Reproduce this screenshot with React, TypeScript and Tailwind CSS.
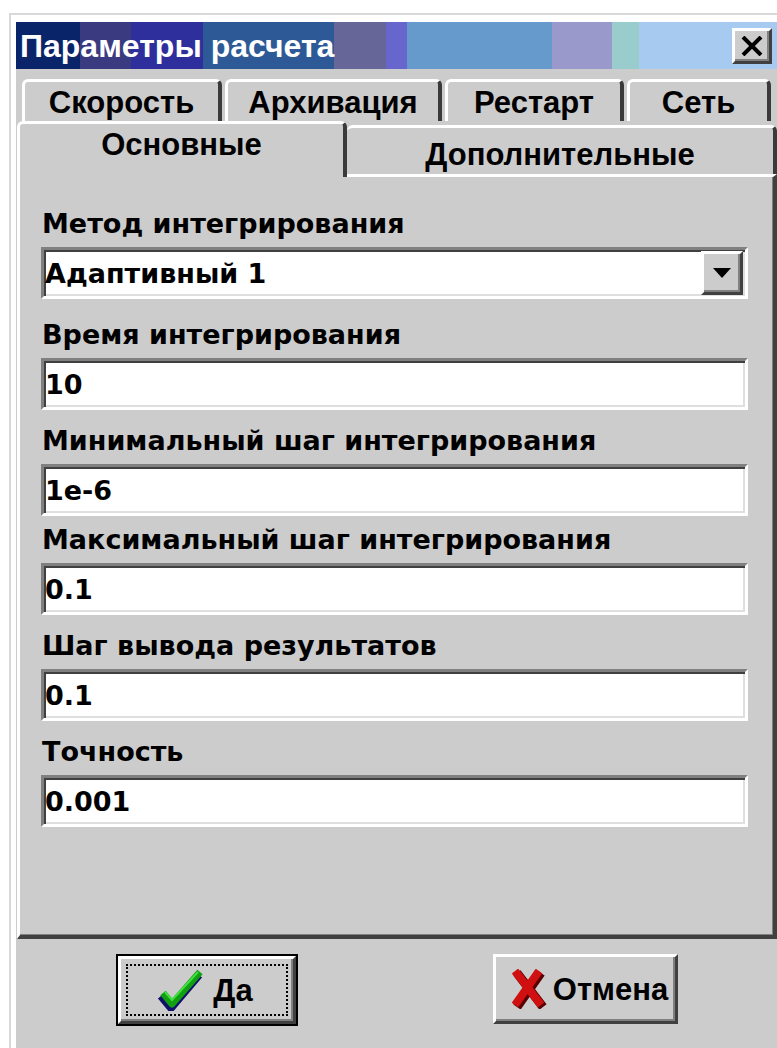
const sunken =
  "border-[3px] border-t-[#808080] border-l-[#808080] border-b-white border-r-white shadow-[inset_2px_2px_0_#404040,inset_-2px_-2px_0_#dfdfdf]";
const raised =
  "border-[3px] border-t-white border-l-white border-b-[#404040] border-r-[#404040] shadow-[inset_-2px_-2px_0_#808080]";

const labelFont = "font-['DejaVu_Sans',sans-serif] font-bold text-[27px] leading-[27px] text-black";
const tabFont = "font-['Liberation_Sans',Arial,sans-serif] font-bold text-[31px] leading-[31px] text-black";

type Field = { label: string; value: string; gap: string; combo?: boolean };

const fields: Field[] = [
  { label: "Метод интегрирования", value: "Адаптивный 1", gap: "mt-0", combo: true },
  { label: "Время интегрирования", value: "10", gap: "mt-[22px]" },
  { label: "Минимальный шаг интегрирования", value: "1e-6", gap: "mt-[17px]" },
  { label: "Максимальный шаг интегрирования", value: "0.1", gap: "mt-[10px]" },
  { label: "Шаг вывода результатов", value: "0.1", gap: "mt-[17px]" },
  { label: "Точность", value: "0.001", gap: "mt-[17px]" },
];

function CheckIcon() {
  return (
    <svg width="46" height="42" viewBox="0 0 46 42">
      <path d="M4 27 L14 39 L42 6" fill="none" stroke="#10106a" strokeWidth="8" strokeLinejoin="round" />
      <path d="M6 24 L15 35 L43 3" fill="none" stroke="#10a010" strokeWidth="7" strokeLinejoin="round" />
      <path d="M8 23 L15 31 L41 3" fill="none" stroke="#40e040" strokeWidth="2" />
    </svg>
  );
}

function CrossIcon() {
  return (
    <svg width="36" height="40" viewBox="0 0 36 40">
      <path d="M6 4 L32 38 M30 4 L6 38" stroke="#5a0000" strokeWidth="9" />
      <path d="M4 2 L30 36 M28 2 L4 36" stroke="#d01010" strokeWidth="8" />
    </svg>
  );
}

function Input({ field }: { field: Field }) {
  return (
    <div className={`${field.gap} flex flex-col`}>
      <div className={`${labelFont} pl-[22px] h-[27px] whitespace-nowrap`}>{field.label}</div>
      <div className={`${sunken} mt-[10px] ml-[21px] mr-[25px] h-[52px] bg-white flex items-center`}>
        <span className={`${labelFont} pl-[1px] flex-1`}>{field.value}</span>
        {field.combo && (
          <div className={`${raised} bg-[#cccccc] w-[42px] h-[44px] mr-[2px] flex items-center justify-center`}>
            <svg width="18" height="10" viewBox="0 0 18 10">
              <path d="M0 0 H18 L9 10 Z" fill="#000" />
            </svg>
          </div>
        )}
      </div>
    </div>
  );
}

export default function App() {
  return (
    <div className="w-[777px] h-[1048px] overflow-hidden bg-white pt-[13px] pl-[9px]">
      <div className="h-[1100px] border-t-2 border-l-2 border-[#d9d9d9] pt-[7px] pl-[5px]">
        <div className="h-full bg-[#cccccc]">
          {/* title bar */}
          <div className="h-[47px] flex items-center justify-between pl-[4px] pr-[5px] bg-[linear-gradient(90deg,#0a246a_0_64px,#3a3a80_64px_115px,#2e2e9c_115px_187px,#2d5a96_187px_318px,#666699_318px_370px,#6666cc_370px_391px,#6699cc_391px_536px,#9999cc_536px_596px,#99cccc_596px_623px,#a6caf0_623px)]">
            <span className="font-['Liberation_Sans',Arial,sans-serif] font-bold text-[32px] leading-none text-white">
              Параметры расчета
            </span>
            <div className={`${raised} bg-[#cccccc] w-[40px] h-[36px] flex items-center justify-center`}>
              <svg width="22" height="20" viewBox="0 0 22 20">
                <path d="M2 1 L20 19 M20 1 L2 19" stroke="#000" strokeWidth="4" />
              </svg>
            </div>
          </div>

          {/* tabs */}
          <div className="pt-[10px] pl-[1px]">
            <div className="flex h-[42px] pl-[5px] gap-[3px]">
              {[
                ["Скорость", "w-[200px]"],
                ["Архивация", "w-[217px]"],
                ["Рестарт", "w-[179px]"],
                ["Сеть", "w-[144px]"],
              ].map(([t, w]) => (
                <div
                  key={t}
                  className={`${w} ${tabFont} rounded-t-[6px] border-t-[3px] border-l-[3px] border-r-[4px] border-t-white border-l-white border-r-[#3a3a3a] flex justify-center pt-[5px]`}
                >
                  {t}
                </div>
              ))}
            </div>
            <div className="relative z-10 flex items-start h-[56px] -mb-[3px]">
              <div className={`${tabFont} w-[330px] h-[56px] bg-[#cccccc] rounded-t-[6px] border-t-[3px] border-l-[3px] border-r-[4px] border-t-white border-l-white border-r-[#3a3a3a] flex justify-center pt-[5px]`}>
                Основные
              </div>
              <div className={`${tabFont} flex-1 mt-[4px] h-[49px] rounded-t-[6px] border-t-[3px] border-r-[4px] border-t-white border-r-[#3a3a3a] flex justify-center pt-[11px]`}>
                Дополнительные
              </div>
            </div>

            {/* page */}
            <div className="h-[765px] border-t-[3px] border-l-[3px] border-t-white border-l-white border-r-[4px] border-b-[4px] border-r-[#404040] border-b-[#404040] shadow-[inset_-1px_-1px_0_#808080] pt-[33px]">
              {fields.map((f) => (
                <Input key={f.label} field={f} />
              ))}
            </div>
          </div>

          {/* buttons */}
          <div className="flex pt-[15px]">
            <div className="ml-[100px] w-[182px] h-[72px] border-2 border-black">
              <div className={`${raised} h-full bg-[#cccccc] p-[5px]`}>
                <div className="h-full border-2 border-dotted border-black flex items-center justify-center gap-[10px] pr-[4px]">
                  <CheckIcon />
                  <span className={tabFont}>Да</span>
                </div>
              </div>
            </div>
            <div className={`${raised} ml-[195px] w-[185px] h-[70px] bg-[#cccccc] flex items-center justify-center gap-[6px] pl-[8px]`}>
              <CrossIcon />
              <span className={tabFont}>Отмена</span>
            </div>
          </div>
        </div>
      </div>
    </div>
  );
}
